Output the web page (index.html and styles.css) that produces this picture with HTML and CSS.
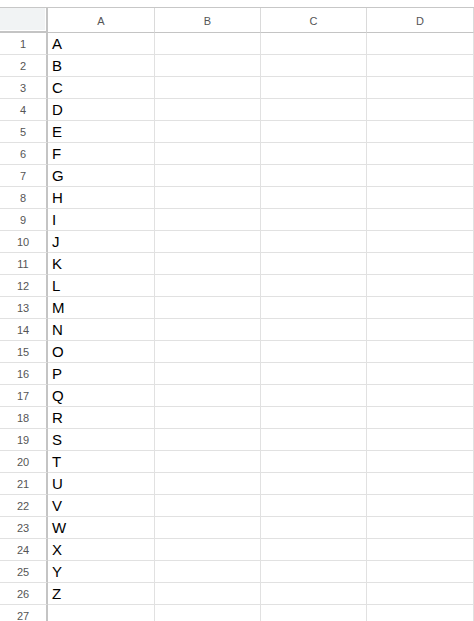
FILE: index.html
```html
<!DOCTYPE html>
<html>
<head>
<meta charset="utf-8">
<link rel="stylesheet" href="styles.css">
</head>
<body>
<div class="topbar"></div>
<div class="sheet" id="sheet">
  <div class="corner"></div>
  <div class="colhead">A</div>
  <div class="colhead">B</div>
  <div class="colhead">C</div>
  <div class="colhead">D</div>
</div>
<script src="app.js"></script>
</body>
</html>
```

FILE: styles.css
```css
html, body {
  margin: 0;
  padding: 0;
  background: #ffffff;
  overflow: hidden;
}
body {
  width: 474px;
  height: 621px;
  font-family: "Liberation Sans", Arial, sans-serif;
}
.topbar {
  box-sizing: border-box;
  height: 8px;
  border-bottom: 1px solid #c7c7c7;
}
.sheet {
  display: grid;
  grid-template-columns: 48px 107px 106px 106px 107px;
  grid-auto-rows: 22px;
  grid-template-rows: 25px;
}
.corner {
  background: #f1f3f4;
  border-right: 2px solid #c4c4c4;
  border-bottom: 2px solid #c4c4c4;
  box-shadow: inset -1px -1px 0 #ffffff;
}
.colhead {
  border-right: 1px solid #dadada;
  border-bottom: 1px solid #c4c4c4;
  font-size: 11px;
  color: #555555;
  display: flex;
  align-items: center;
  justify-content: center;
  padding-top: 1px;
}
.rowhead {
  border-right: 2px solid #c4c4c4;
  border-bottom: 1px solid #e1e1e1;
  font-size: 11px;
  color: #555555;
  display: flex;
  align-items: center;
  justify-content: center;
}
.cell {
  border-right: 1px solid #e1e1e1;
  border-bottom: 1px solid #e1e1e1;
  font-size: 15px;
  color: #000000;
  display: flex;
  align-items: center;
  padding-left: 4px;
}
```

FILE: app.js
```js
var sheet = document.getElementById('sheet');
var letters = 'ABCDEFGHIJKLMNOPQRSTUVWXYZ';
for (var r = 1; r <= 27; r++) {
  var h = document.createElement('div');
  h.className = 'rowhead';
  h.textContent = r;
  sheet.appendChild(h);
  for (var c = 0; c < 4; c++) {
    var d = document.createElement('div');
    d.className = 'cell';
    if (c === 0 && r <= 26) d.textContent = letters[r - 1];
    sheet.appendChild(d);
  }
}
```
